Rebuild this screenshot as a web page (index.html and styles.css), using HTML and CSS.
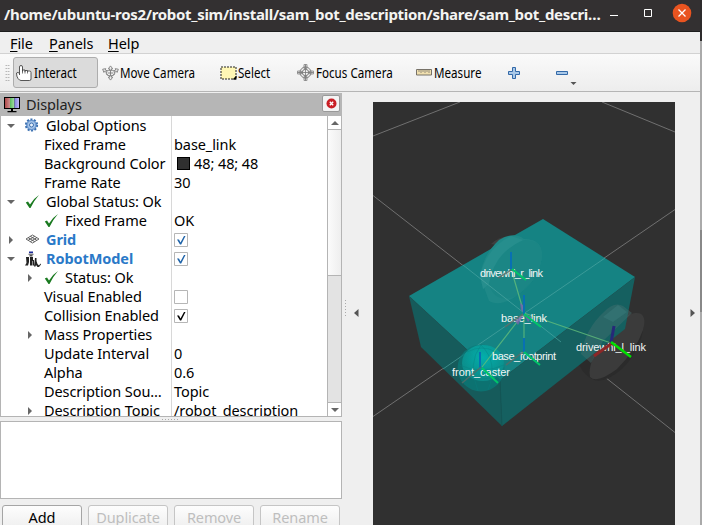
FILE: index.html
```html
<!DOCTYPE html>
<html lang="en">
<head>
<meta charset="utf-8">
<title>RViz</title>
<link rel="stylesheet" href="styles.css">
</head>
<body>
<div class="desktop">
<main class="window">
<header class="titlebar">
  <h1>/home/ubuntu-ros2/robot_sim/install/sam_bot_description/share/sam_bot_descri…</h1>
  <svg class="controls" width="92" height="31" viewBox="0 0 92 31"><path d="M2 15.500h8" stroke="#fff"/><path d="M36.500 9.500h7v7h-7z" fill="none" stroke="#fff"/><circle cx="74" cy="13" r="9.300" fill="#e95420"/><path d="M70.500 9.500l7 7m0-7l-7 7" stroke="#fff" stroke-width="1.300"/></svg>
</header>
<nav class="menubar"><span class="m1"><u>F</u>ile</span><span class="m2"><u>P</u>anels</span><span><u>H</u>elp</span></nav>
<div class="toolbar">
  <i class="grip"></i>
  <button class="tool active"><svg width="16" height="16" viewBox="0 0 16 16"><path d="M3.500 10V2q0-1.500 1.500-1.500T6.500 2v4.500V5h2.500v1.500V5.500h2.500V7V6h2q1.500 0 1.500 1.500V14q0 1.500-1.500 1.500H5Q3.500 15.500 2 13.500T.5 8Q2 6.500 3.500 8.500" fill="#fff" stroke="#444" stroke-width=".9"/><path d="M6.500 6v2.500M9 6v2.500M11.500 6v2.500" stroke="#555" stroke-width=".8"/></svg><span>Interact</span></button>
  <button class="tool t2"><svg width="17" height="16" viewBox="0 0 18 16"><g fill="#eee" stroke="#777" stroke-width=".9"><path d="M9 .5l2.300 3H10v2H8v-2H6.700zM9 15.500l2.300-3H10v-2H8v2H6.700zM.7 4l3.300-.6-.6 1.400 3 1.200-.8 1.600-3-1.400-.6 1.200zM17.300 4L14 3.400l.6 1.400-3 1.200.8 1.600 3-1.400.6 1.200z"/><ellipse cx="9" cy="8" rx="4.500" ry="3"/><path d="M5 9l2 2M13 9l-2 2M9 5v6M6 8h6"/></g></svg><span>Move Camera</span></button>
  <button class="tool t3"><svg width="17" height="14" viewBox="0 0 17 14"><path d="M1 1h15v12H1z" fill="#fff7b5" stroke="#222" stroke-dasharray="2 1"/><path d="M16.500 9.500v4h-4z"/></svg><span>Select</span></button>
  <button class="tool t4"><svg width="17" height="17" viewBox="0 0 17 17"><g fill="none" stroke="#777"><path d="M7 .5h3v4H7zM7 12.500h3v4H7zM.5 7h4v3h-4zM12.500 7h4v3h-4z" stroke="#999" fill="#ddd"/><circle cx="8.500" cy="8.500" r="5.500"/><circle cx="8.500" cy="8.500" r="3.200"/><path d="M8.500.5v16M.5 8.500h16" stroke-width=".8"/></g></svg><span>Focus Camera</span></button>
  <button class="tool t5"><svg width="17" height="7" viewBox="0 0 17 7"><path d="M.5.5h15v5.500H.5z" fill="#f0dfae" stroke="#777268"/><path d="M3 1v2M5 1v3M7 1v2M9 1v3M11 1v2M13 1v3" stroke="#7b776e" stroke-width=".8"/></svg><span>Measure</span></button>
  <svg class="plus" width="14" height="14" viewBox="0 0 14 14"><path d="M5.500 1.500h3v4h4v3h-4v4h-3v-4h-4v-3h4z" fill="#a9c8e8" stroke="#3369a8"/></svg>
  <svg class="minus" width="24" height="26" viewBox="0 0 24 26"><path d="M1.500 11.500h11v3h-11z" fill="#a9c8e8" stroke="#3369a8"/><path d="M15.500 22h6l-3 3z" fill="#555"/></svg>
</div>
<div class="content">
  <section class="dock">
    <div class="dock-title"><svg width="17" height="16" viewBox="0 0 17 16"><defs><linearGradient id="r"><stop stop-color="#b04a4a"/><stop offset="1" stop-color="#cf9090"/></linearGradient><linearGradient id="g"><stop stop-color="#5cba60"/><stop offset="1" stop-color="#a6dfa6"/></linearGradient><linearGradient id="b"><stop stop-color="#8080e0"/><stop offset="1" stop-color="#c0b8f2"/></linearGradient></defs><path d="M0 0h16v12H0z"/><path d="M1 1h5v10H1z" fill="url(#r)"/><path d="M6 1h4.500v10H6z" fill="url(#g)"/><path d="M10.500 1H15v10h-4.500z" fill="url(#b)"/><path d="M7 12h2v2h3.500v1.300h-9V14H7z"/></svg><h2>Displays</h2><b class="close"><svg width="11" height="11" viewBox="0 0 11 11"><circle cx="5.500" cy="5.500" r="5" fill="#c91e25"/><path d="M3.800 3.800l3.400 3.400m0-3.400L3.800 7.200" stroke="#fff" stroke-width="1.400"/></svg></b></div>
    <div class="tree">
      <div class="rows">
        <div class="row"><div class="name"><i class="down"></i><svg class="ic" viewBox="0 0 16 16"><circle cx="6.500" cy="7" r="5.600" fill="#a6c4e8" stroke="#3c70b0" stroke-width="2" stroke-dasharray="2 1.520"/><circle cx="6.500" cy="7" r="4.500" fill="#a6c4e8" stroke="#5b8bc8"/><circle cx="6.500" cy="7" r="2" fill="#e8f1fb" stroke="#3c70b0"/></svg><span>Global Options</span></div></div>
        <div class="row"><div class="name leaf"><span>Fixed Frame</span></div><div class="val">base_link</div></div>
        <div class="row"><div class="name leaf"><span>Background Color</span></div><div class="val"><i class="swatch"></i>48; 48; 48</div></div>
        <div class="row"><div class="name leaf"><span>Frame Rate</span></div><div class="val">30</div></div>
        <div class="row"><div class="name"><i class="down"></i><svg class="ic" viewBox="0 0 16 16"><path d="M.8 8.500L3 7.500 5 10.500Q8.500 4.500 14 1 9 6.500 5.500 14H4.500z" fill="#1a7a20"/></svg><span>Global Status: Ok</span></div></div>
        <div class="row"><div class="name sub"><svg class="ic" viewBox="0 0 16 16"><path d="M.8 8.500L3 7.500 5 10.500Q8.500 4.500 14 1 9 6.500 5.500 14H4.500z" fill="#1a7a20"/></svg><span>Fixed Frame</span></div><div class="val">OK</div></div>
        <div class="row"><div class="name blue"><i class="right"></i><svg class="ic" viewBox="0 0 16 16"><path d="M1 7l6.500-4L14 7l-6.500 4zM3.200 5.700l6.500 4M5.300 4.300l6.500 4M3.200 8.300l6.500-4M5.300 9.700l6.500-4" fill="none" stroke="#555" stroke-width=".9"/></svg><span>Grid</span></div><div class="val"><svg class="check" viewBox="0 0 14 14"><path class="box" d="M.5.5h13v13H.5z"/><path d="M3 6.500h2l1.500 3L10 3h1.500L7.200 11.500H6z" fill="#1d62a8"/></svg></div></div>
        <div class="row"><div class="name blue"><i class="down"></i><svg class="ic" viewBox="0 0 16 16"><path d="M4 .5h4v1.700H4z" fill="#1c2a9a"/><path d="M3.500 2.700h5v1h-5zM4.500 4h3v1.500h-3z" fill="#555"/><path d="M1 6h3v5l-1 3.500H0L1.500 12zM5 6h3v3h1v5.500H7.500V10H7v4.500H5zM10 7h1.500v3l1 3 1.500 1.500 1.500-2 .5 1-2 2.500h-1.500l-1.500-2-.5 1.500H9z" fill="#222"/></svg><span>RobotModel</span></div><div class="val"><svg class="check" viewBox="0 0 14 14"><path class="box" d="M.5.5h13v13H.5z"/><path d="M3 6.500h2l1.500 3L10 3h1.500L7.200 11.500H6z" fill="#1d62a8"/></svg></div></div>
        <div class="row"><div class="name sub"><i class="right"></i><svg class="ic" viewBox="0 0 16 16"><path d="M.8 8.500L3 7.500 5 10.500Q8.500 4.500 14 1 9 6.500 5.500 14H4.500z" fill="#1a7a20"/></svg><span>Status: Ok</span></div></div>
        <div class="row"><div class="name leaf"><span>Visual Enabled</span></div><div class="val"><svg class="check" viewBox="0 0 14 14"><path class="box" d="M.5.5h13v13H.5z"/></svg></div></div>
        <div class="row"><div class="name leaf"><span>Collision Enabled</span></div><div class="val"><svg class="check" viewBox="0 0 14 14"><path class="box" d="M.5.5h13v13H.5z"/><path d="M3 6.500h2l1.500 3L10 3h1.500L7.200 11.500H6z"/></svg></div></div>
        <div class="row"><div class="name leaf"><i class="right"></i><span>Mass Properties</span></div></div>
        <div class="row"><div class="name leaf"><span>Update Interval</span></div><div class="val">0</div></div>
        <div class="row"><div class="name leaf"><span>Alpha</span></div><div class="val">0.6</div></div>
        <div class="row"><div class="name leaf"><span>Description Sou…</span></div><div class="val">Topic</div></div>
        <div class="row"><div class="name leaf"><i class="right"></i><span>Description Topic</span></div><div class="val">/robot_description</div></div>
      </div>
      <div class="scroll"><div class="arrow"><i class="up"></i></div><div class="thumb"></div><div class="trough"></div><div class="arrow end"><i class="down"></i></div></div>
    </div>
    <div class="hsplit"><i></i></div>
    <div class="help"></div>
    <div class="buttons"><button class="enabled">Add</button><button>Duplicate</button><button>Remove</button><button>Rename</button></div>
  </section>
  <div class="vsplit"><i class="dots"></i><svg width="5" height="8" viewBox="0 0 5 8"><path d="M4.500 0v8L0 4z" fill="#555"/></svg></div>
  <svg class="scene" width="302" height="423" viewBox="373 102 302 423">
    <defs><radialGradient id="ball" cx=".5" cy=".35" r=".6"><stop stop-color="#00b8b4"/><stop offset="1" stop-color="#0c8f8c"/></radialGradient></defs>
    <path d="M373 102h302v423H373z" fill="#303030"/>
    <g stroke="#777" fill="none" stroke-width=".9"><path d="M460 102l-87 34M602 102l73 30M373 195.500L524 313 675 432.500M675 209.500L524 313 373 416.500"/></g>
    <path d="M577 355L592 316 615 311 630 319Q645 309 644 323 642 349 622 369 603 385 592 379 579 372 577 355z" fill="#2b2b2b"/>
    <path d="M590 377Q587 363 604 340 623 314 635 313 648 312 643 330 636 350 617 369 597 384 590 377z" fill="#3b3b3b"/>
    <path d="M491 244Q503 233 516 238L508 247z" fill="#3f3f3f"/>
    <path d="M409 296L543 219 635 277 500 380z" fill="#158383"/>
    <path d="M409 296L500 380 502 426 421 347z" fill="#165b5b"/>
    <path d="M500 380L635 277 625 329 502 426z" fill="#156060"/>
    <path d="M500 380L502 426" fill="none" stroke="#135656"/>
    <path d="M581 354Q586 328 604 312 614 301 623 306L632 313 603 341 591 363z" fill="#4a7474" opacity=".4"/>
    <path d="M603 317l15-12 9 7-14 10z" fill="#4a9090" opacity=".25"/>
    <path d="M480 276Q483 255 499 240 514 231 524 239 541 239 542 254 541 277 520 293 502 308 489 301z" fill="#1f8988"/>
    <path d="M480 276Q487 247 511 236L523 240Q498 252 489 284L483 289z" fill="#268e8d"/>
    <path d="M489 284Q494 252 524 240 542 240 542 255 540 281 514 297 494 303 489 284z" fill="#1b8685"/>
    <g stroke="#50a8a4" opacity=".65" fill="none"><path d="M463 265L561 342M605 258L443 369"/></g>
    <circle cx="481" cy="368" r="23.500" fill="#087c7a" opacity=".7"/>
    <ellipse cx="483" cy="363" rx="21" ry="18" fill="url(#ball)" opacity=".85"/>
    <path d="M459 365q23 10 45 0M460 374q22 10 42 0M467 352q15-8 29 0M481 345q-14 18-3 46M481 345q18 18 7 45" fill="none" stroke="#087f7f" opacity=".4"/>
    <g fill="none" stroke-width="1.200"><path d="M524 313l-12-41M524 313L482 367M524 313v39M524 313l87 30" stroke="#62bd7b" opacity=".8"/></g>
    <g class="labels"><text x="480" y="277" textLength="63">drivewhl_r_link</text><text x="501" y="322" textLength="46">base_link</text><text x="576" y="351" textLength="70">drivewhl_l_link</text><text x="492" y="360" textLength="64">base_footprint</text><text x="452" y="376" textLength="58">front_caster</text></g>
    <path d="M521 310l-1-7 3 2 1 8zM515 321l3 4 6-11zM524 314l8 3-4 5z" fill="#7864ad" opacity=".8"/>
    <g fill="none" stroke-width="2">
      <path d="M511 252v17M524 295v20M524 338v14M480 352v16" stroke="#0870b3"/><path d="M512 269l14 11M524 314l17 13M524 352l16 13M482 368l16 15" stroke="#00c568"/>
      <path d="M511 270l-13 8M523 314l-18 13M523 352l-17 13M481 367l-19 16" stroke="#586b66" stroke-width="1.600" opacity=".8"/>
      <path d="M611 343l3-17" stroke="#262878" stroke-width="3"/><path d="M611 344l-17 12" stroke="#8d2727" stroke-width="3"/><path d="M611 342l20 15" stroke="#00e000" stroke-width="2.500"/>
    </g>
  </svg>
  <div class="rightbar"><svg width="5" height="8" viewBox="0 0 5 8"><path d="M.5 0v8L5 4z" fill="#555"/></svg></div>
</div>
</main>
<aside class="edge"></aside>
</div>
</body>
</html>
```

FILE: styles.css
```css
* { box-sizing: border-box; }
body { margin: 0; width: 702px; height: 525px; overflow: hidden; background: #efefef; color: #000; font: 14.500px "Noto Sans", sans-serif; letter-spacing: -.08px; }
h1, h2 { margin: 0; }
i, u, b { font-style: normal; }
svg { display: block; flex-shrink: 0; }
.desktop { display: flex; height: 525px; }
.window { width: 700px; height: 525px; display: flex; flex-direction: column; }
.titlebar { height: 32px; flex: none; display: flex; background: #333031; border-bottom: 1px solid #1c1c1c; }
.titlebar h1 { width: 608px; padding-left: 4px; font-size: 15px; font-weight: 700; line-height: 28px; color: #f4f4f2; white-space: nowrap; letter-spacing: -.3px; }
.menubar { height: 22px; flex: none; display: flex; padding-left: 10px; line-height: 22px; border-bottom: 1px solid #d2d2d2; }
.m1 { width: 39px; }
.m2 { width: 59px; }
u { text-underline-offset: 2px; }
.toolbar { height: 38px; flex: none; display: flex; align-items: center; border-bottom: 1px solid #b5b5b5; background: linear-gradient(#fafafa, #ededed); }
.grip { width: 5px; height: 17px; margin-left: 5px; margin-right: 3px; background: radial-gradient(circle, #aaa .7px, transparent .9px) 0 0 / 2.500px 3px; }
.tool { height: 31px; flex: none; display: flex; align-items: center; border: 1px solid transparent; background: none; padding: 0; font: 13.500px "Noto Sans", sans-serif; color: #000; white-space: nowrap; }
.tool span { transform: scaleX(.86); transform-origin: left; width: 0; letter-spacing: 0; }
.tool svg { margin-right: 1px; }
.active { width: 85px; border-color: #adadad; border-radius: 3px; background: #dbdbdb; padding-left: 2px; }
.active svg { margin-right: 2px; }
.t2 { width: 118px; padding-left: 3px; }
.t3 { width: 78px; padding-left: 3px; }
.t4 { width: 120px; padding-left: 2px; }
.t4 svg { margin-right: 2px; }
.t5 { width: 93px; padding-left: 1px; }
.minus { margin-left: 34px; }
.content { flex: 1; min-height: 0; display: flex; }
.dock { width: 342px; flex: none; display: flex; flex-direction: column; }
.dock-title { height: 23px; margin-top: 1px; flex: none; display: flex; align-items: center; background: #b6b6b6; padding-left: 4px; padding-right: 2px; }
.dock-title h2 { font-size: 14.500px; font-weight: 400; line-height: 20px; margin-left: 5px; margin-bottom: 2px; color: #222; }
.close { width: 18px; height: 17px; margin-left: auto; margin-bottom: 2px; display: flex; align-items: center; justify-content: center; border: 1px solid #999; border-radius: 2px; background: #f4f4f4; }
.tree { height: 301px; flex: none; display: flex; overflow: hidden; background: #fff; border: 1px solid #b4b4b4; border-top: 0; }
.rows { width: 326px; height: 304px; flex: none; background: linear-gradient(#d8d8d8, #d8d8d8) 170px 0 / 1px 100% no-repeat; }
.row { height: 19px; display: flex; line-height: 19px; }
.name { width: 173px; flex: none; position: relative; display: flex; align-items: center; padding-left: 24px; white-space: nowrap; }
.leaf { padding-left: 43px; }
.sub { padding-left: 43px; }
.ic { width: 16px; height: 16px; margin-right: 5px; }
.blue { color: #2a79c8; font-weight: 700; }
.val { display: flex; align-items: center; white-space: nowrap; }
.check { width: 14px; height: 14px; }
.box { fill: #fff; stroke: #b6b6b6; }
.swatch { width: 13px; height: 13px; background: #303030; border: 1px solid #000; margin: 0 4px 0 3px; }
.down { width: 0; height: 0; border: 4px solid transparent; border-top: 4px solid #666; border-bottom: 0; }
.right { width: 0; height: 0; border: 4px solid transparent; border-left: 4px solid #666; border-right: 0; }
.up { width: 0; height: 0; border: 4px solid transparent; border-bottom: 4px solid #666; border-top: 0; }
.name .down { margin-left: -18px; margin-right: 10px; }
.name .right { margin-left: -16px; margin-right: 12px; }
.scroll { flex: 1; border-left: 1px solid #b4b4b4; display: flex; flex-direction: column; }
.arrow { height: 14px; display: flex; align-items: center; justify-content: center; border-bottom: 1px solid #b4b4b4; }
.thumb { height: 146px; background: linear-gradient(90deg, #fbfbfb, #eee); border-bottom: 1px solid #b4b4b4; }
.trough { flex: 1; background: #e3e3e3; }
.end { border-top: 1px solid #b4b4b4; border-bottom: 0; }
.hsplit { height: 4px; flex: none; display: flex; justify-content: center; align-items: center; }
.hsplit i { width: 18px; height: 1px; background: repeating-linear-gradient(90deg, #aaa 0 1px, transparent 1px 3px); }
.help { height: 78px; flex: none; background: #fff; border: 1px solid #b4b4b4; }
.buttons { display: flex; gap: 6px; padding: 6px 2px 0; height: 26px; flex: none; overflow: hidden; }
.buttons button { width: 80px; height: 27px; flex: none; padding: 0 0 3px; border: 1px solid #c5c5c5; border-radius: 3px; background: linear-gradient(#fdfdfd, #ededed); color: #bebebe; font: inherit; letter-spacing: -.1px; }
.buttons .enabled { border-color: #a5a5a5; color: #000; }
.vsplit { width: 31px; flex: none; position: relative; display: flex; gap: 8px; padding: 215px 0 0 3px; }
.dots { width: 1px; height: 17px; margin-top: -7px; background: repeating-linear-gradient(#aaa 0 1px, transparent 1px 3px); }
.vsplit svg { margin-top: 2px; }
.scene { margin-top: 10px; }
.labels { fill: #f2f6f6; font: 11px "Liberation Sans", sans-serif; letter-spacing: 0; }
.rightbar { flex: 1; padding: 217px 0 0 15px; }
.edge { width: 2px; background: linear-gradient(#2d2b2c 0 41px, #aaa 41px 230px, #888 230px 312px, #aaa 312px); }
```
